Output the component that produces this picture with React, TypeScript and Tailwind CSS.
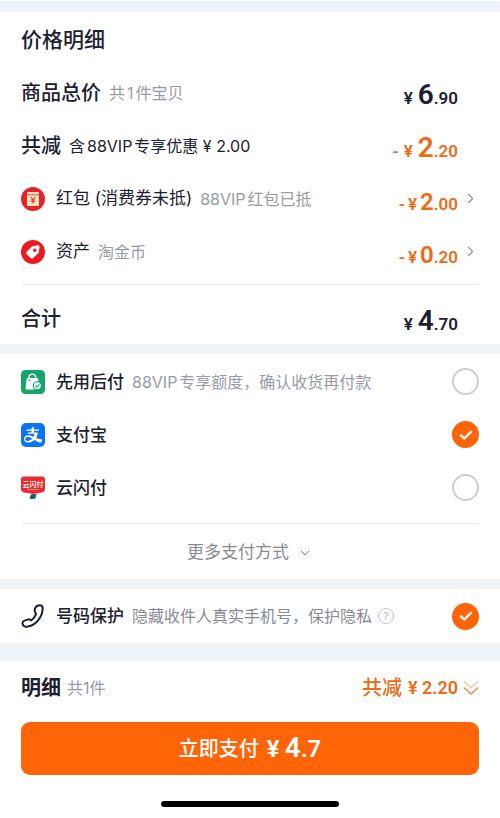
import { useState } from 'react'
import type { ReactNode } from 'react'
import { ChevronDown, ChevronRight } from 'lucide-react'
import { AiFillAlipaySquare } from 'react-icons/ai'

function RedPacketIcon() {
  return (
    <svg viewBox="0 0 24 24" className="size-6 shrink-0" aria-hidden="true">
      <circle cx="12" cy="12" r="12" fill="#e3242b" />
      <rect x="6" y="5" width="12" height="14" rx="1" fill="#fbe3bd" />
      <path d="M6 7.800h12" stroke="#e3242b" strokeWidth="0.8" />
      <path d="M9.800 10l2.200 2.600L14.200 10M12 12.600v4M9.900 13h4.200M9.900 14.700h4.200" stroke="#d9382f" strokeWidth="1.100" fill="none" />
    </svg>
  )
}

function TagIcon() {
  return (
    <svg viewBox="0 0 24 24" className="size-6 shrink-0" aria-hidden="true">
      <circle cx="12" cy="12" r="12" fill="#f01820" />
      <path
        d="M11.800 6.200l4.800-.9c1.300-.2 2.100.6 1.900 1.900l-.7 4.900c-.1.500-.3.900-.6 1.200l-4.900 4.800c-.8.800-1.900.8-2.700 0l-3.800-3.700c-.8-.8-.8-1.900 0-2.700l4.800-4.900c.3-.3.7-.5 1.200-.6z"
        fill="#fff"
      />
      <circle cx="13.800" cy="10.200" r="1.700" fill="#f01820" />
    </svg>
  )
}

function PayLaterIcon() {
  return (
    <svg viewBox="0 0 24 24" className="size-6 shrink-0" aria-hidden="true">
      <rect width="24" height="24" rx="4.5" fill="#15a56b" />
      <path d="M8 9V7.400a3.300 3.300 0 0 1 6.600 0V9" stroke="#fff" strokeWidth="1.400" fill="none" />
      <path d="M6.200 8.500h10.400l1.200 10.500H5z" fill="#fff" stroke="#fff" strokeLinejoin="round" />
      <path d="M8 9v1.400a.9.900 0 0 0 1.600 0" stroke="#15a56b" strokeWidth="0.9" fill="none" />
      <circle cx="16.300" cy="15.700" r="4" fill="#fff" stroke="#15a56b" strokeWidth="1.100" />
      <path d="M14.300 15.700l1.500 1.500 2.600-2.800" stroke="#15a56b" strokeWidth="1.200" fill="none" />
    </svg>
  )
}

function UnionPayIcon() {
  return (
    <svg viewBox="0 0 24 24" className="size-6 shrink-0" aria-hidden="true">
      <path d="M3 .5h18a3 3 0 0 1 3 3v9a4 4 0 0 1-3.300 4L12 18l-8.700-1.500A4 4 0 0 1 0 12.500v-9a3 3 0 0 1 3-3z" fill="#e92a2e" />
      <path d="M10 18.500l5.500-.6-1.500 4.800H8.600z" fill="#17414f" />
      <path d="M12.800 18.200l2.700-.3-1.500 4.800h-2.500z" fill="#127a72" />
      <text x="12" y="10.5" textAnchor="middle" fontSize="7" fontWeight="500" fill="#fff" fontFamily="'Noto Sans CJK SC', sans-serif">
        云闪付
      </text>
      <path d="M6.500 13.500h11" stroke="#f7a8a6" strokeWidth="1.200" strokeDasharray="1.600 .4" />
    </svg>
  )
}

function HandsetIcon() {
  return (
    <svg viewBox="0 0 24 24" className="size-6 shrink-0" fill="none" stroke="#1b2130" strokeWidth="2" strokeLinejoin="round" aria-hidden="true">
      <path d="M14 4.300c.6-1.600 1.900-2.700 3.700-2.900 2-.2 3.700.5 3.900 2.300.3 3.300-.6 6.700-2.500 9.900-2.900 5-7.500 8.500-13.200 9.100-2.300.2-3.800-.6-4.300-2.600-.4-1.700.3-3 1.900-3.500l3.800-1.200c.9-.3 1.500-.1 2.200.6l.7.500c2.200-1.500 3.900-3.800 4.900-6.300l-.9-1.800c-.7-1.300-.7-2.700-.2-4.100z" />
    </svg>
  )
}

type PriceProps = {
  yuan: string
  cents: string
  minus?: boolean
  small?: boolean
}

function Price({ yuan, cents, minus, small }: PriceProps) {
  return (
    <span
      className={`ml-auto flex items-baseline pt-2 font-[Roboto,sans-serif] text-[17px] leading-8 font-semibold ${
        small ? 'gap-[3px]' : 'gap-[5px]'
      } ${minus ? 'text-[#ed6a16]' : 'text-[#1b2130]'}`}
    >
      {minus && <span>-</span>}
      <span>¥</span>
      <span>
        <span className={small ? 'text-2xl leading-8' : 'text-[28px] leading-8'}>{yuan}</span>.{cents}
      </span>
    </span>
  )
}

function RoundCheck({ id, type, name, checked, onChange }: {
  id: string
  type: 'radio' | 'checkbox'
  name?: string
  checked: boolean
  onChange: () => void
}) {
  return (
    <span className="ml-auto grid shrink-0 place-items-center">
      <input
        id={id}
        type={type}
        name={name}
        checked={checked}
        onChange={onChange}
        className="col-start-1 row-start-1 size-[27px] appearance-none rounded-full border-2 border-[#cdcdcf] bg-white checked:border-[#ff6407] checked:bg-[#ff6407]"
      />
      {checked && (
        <svg viewBox="0 0 14 14" className="pointer-events-none col-start-1 row-start-1 size-[14px]" aria-hidden="true">
          <path d="M2 7.300l3.300 3.200L12 3.900" fill="none" stroke="#fff" strokeWidth="2.400" strokeLinecap="round" strokeLinejoin="round" />
        </svg>
      )}
    </span>
  )
}

const payMethods: { id: string; title: string; note?: string; icon: ReactNode }[] = [
  { id: 'later', title: '先用后付', note: '88VIP专享额度，确认收货再付款', icon: <PayLaterIcon /> },
  {
    id: 'alipay',
    title: '支付宝',
    icon: (
      <span className="flex size-6 shrink-0 items-center justify-center overflow-hidden rounded-[5px] bg-white text-[#0b74f5]">
        <AiFillAlipaySquare className="size-8 shrink-0" />
      </span>
    ),
  },
  { id: 'unionpay', title: '云闪付', icon: <UnionPayIcon /> },
]

const discounts = [
  { title: '红包 (消费券未抵)', note: '88VIP红包已抵', yuan: '2', cents: '00', icon: <RedPacketIcon /> },
  { title: '资产', note: '淘金币', yuan: '0', cents: '20', icon: <TagIcon /> },
]

export default function App() {
  const [method, setMethod] = useState('alipay')
  const [protect, setProtect] = useState(true)

  return (
    <div className="min-h-screen border-t border-white bg-[#eff3f6] pt-[11px] font-[Inter,'Noto_Sans_CJK_SC',sans-serif] text-[#1b2130] [text-autospace:normal]">
      {/* Price details */}
      <section className="bg-white px-[21px] pt-3">
        <h2 className="text-[21px] leading-8 font-medium">价格明细</h2>

        <div className="mt-[10px] flex h-[53px] items-center pr-[21px]">
          <span className="text-xl font-medium">商品总价</span>
          <span className="ml-2 text-base text-[#979ba3]">共1件宝贝</span>
          <Price yuan="6" cents="90" />
        </div>
        <div className="flex h-[53px] items-center pr-[21px]">
          <span className="text-xl font-medium">共减</span>
          <span className="ml-2 text-base">含88VIP专享优惠 ¥ 2.00</span>
          <Price minus yuan="2" cents="20" />
        </div>
        {discounts.map((item) => (
          <button key={item.title} className="flex h-[53px] w-full items-center text-left">
            {item.icon}
            <span className="ml-[11px] text-[17px]">{item.title}</span>
            <span className="ml-2 text-base text-[#979ba3]">{item.note}</span>
            <Price minus small yuan={item.yuan} cents={item.cents} />
            <ChevronRight className="ml-1 size-[17px] text-[#8d9097]" strokeWidth={1.5} />
          </button>
        ))}

        <div className="mt-1.5 flex h-[60px] items-center border-t border-[#eeeeef] pt-2 pr-[21px]">
          <span className="text-xl font-medium">合计</span>
          <Price yuan="4" cents="70" />
        </div>
      </section>

      {/* Payment methods */}
      <section className="mt-[10px] bg-white px-[21px]">
        <div className="pt-px pb-[9px]">
          {payMethods.map((item) => (
            <label key={item.id} htmlFor={item.id} className="flex h-[53px] items-center">
              {item.icon}
              <span className="ml-[11px] pt-0.5 text-[17px] font-medium">{item.title}</span>
              {item.note && <span className="ml-2 text-base text-[#979ba3]">{item.note}</span>}
              <RoundCheck
                id={item.id}
                type="radio"
                name="pay"
                checked={method === item.id}
                onChange={() => setMethod(item.id)}
              />
            </label>
          ))}
        </div>
        <button className="flex h-14 w-full items-center justify-center gap-2 border-t border-[#eeeeef] pt-0.5 text-[17px] text-[#868b95]">
          更多支付方式
          <ChevronDown className="size-4" strokeWidth={1.5} />
        </button>
      </section>

      {/* Number protection */}
      <section className="mt-[10px] bg-white px-[21px]">
        <label htmlFor="protect" className="flex h-[54px] items-center">
          <HandsetIcon />
          <span className="ml-[11px] pt-0.5 text-[17px] font-medium">号码保护</span>
          <span className="ml-2 text-base text-[#868b95]">隐藏收件人真实手机号，保护隐私</span>
          <span className="ml-1.5 flex size-4 items-center justify-center rounded-full border border-[#c4c6ca] text-[11px] leading-none text-[#b4b7bc]">
            ?
          </span>
          <RoundCheck id="protect" type="checkbox" checked={protect} onChange={() => setProtect(!protect)} />
        </label>
      </section>

      {/* Pay bar */}
      <footer className="mt-[18px] bg-white px-[21px] pb-[11px]">
        <div className="flex h-[54px] items-center">
          <span className="text-xl font-semibold">明细</span>
          <span className="ml-1.5 text-base text-[#979ba3] [text-autospace:no-autospace]">共1件</span>
          <button className="ml-auto flex items-center text-xl font-medium text-[#ed6a16]">
            共减
            <span className="ml-1.5 font-[Roboto,sans-serif] text-lg font-semibold">¥ 2.20</span>
            <svg viewBox="0 0 16 16" className="ml-[5px] size-4" fill="none" strokeWidth="1.600" strokeLinecap="round" strokeLinejoin="round" aria-hidden="true">
              <path d="M1.500 2l6.500 5.500L14.500 2" stroke="#f6c3a0" />
              <path d="M1.500 8l6.500 6L14.500 8" stroke="#ed8a48" />
            </svg>
          </button>
        </div>
        <button className="mt-[7px] flex h-[53px] w-full items-center justify-center gap-2 rounded-[9px] bg-[#ff6407] text-xl font-medium text-white">
          立即支付
          <span className="flex items-baseline gap-[5px] font-[Roboto,sans-serif] font-semibold">
            <span className="text-2xl">¥</span>
            <span>
              <span className="text-[28px] leading-8">4</span>
              <span className="text-2xl">.7</span>
            </span>
          </span>
        </button>
        <div className="mx-auto mt-[26px] h-[6px] w-[178px] rounded-full bg-black" />
      </footer>
    </div>
  )
}
